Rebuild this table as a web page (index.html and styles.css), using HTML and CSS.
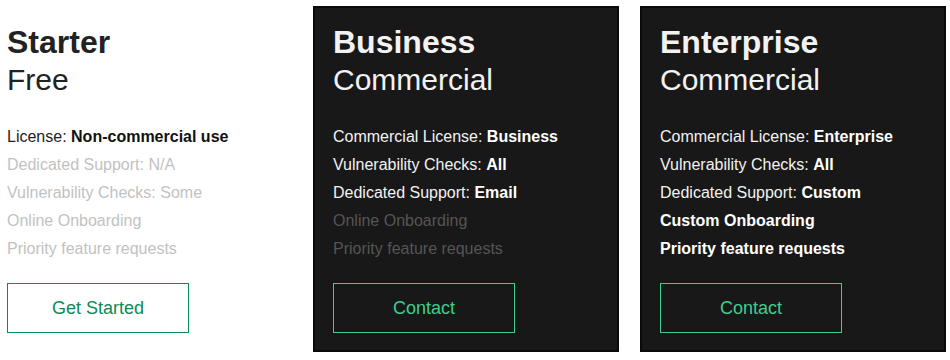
FILE: index.html
```html
<!DOCTYPE html>
<html lang="en">
<head>
    <meta charset="UTF-8">
    <meta name="viewport" content="width=device-width, initial-scale=1.0">
    <title>Pricing</title>
    <link rel="stylesheet" href="styles.css">
</head>
<body>
    <div class="plans">
        <div class="plan plan-light">
            <div class="plan-name">Starter</div>
            <div class="plan-kind">Free</div>
            <ul class="features">
                <li>License: <b>Non-commercial use</b></li>
                <li class="off">Dedicated Support: N/A</li>
                <li class="off">Vulnerability Checks: Some</li>
                <li class="off">Online Onboarding</li>
                <li class="off">Priority feature requests</li>
            </ul>
            <a class="plan-btn" href="#">Get Started</a>
        </div>

        <div class="plan plan-dark">
            <div class="plan-name">Business</div>
            <div class="plan-kind">Commercial</div>
            <ul class="features">
                <li>Commercial License: <b>Business</b></li>
                <li>Vulnerability Checks: <b>All</b></li>
                <li>Dedicated Support: <b>Email</b></li>
                <li class="off">Online Onboarding</li>
                <li class="off">Priority feature requests</li>
            </ul>
            <a class="plan-btn" href="#">Contact</a>
        </div>

        <div class="plan plan-dark">
            <div class="plan-name">Enterprise</div>
            <div class="plan-kind">Commercial</div>
            <ul class="features">
                <li>Commercial License: <b>Enterprise</b></li>
                <li>Vulnerability Checks: <b>All</b></li>
                <li>Dedicated Support: <b>Custom</b></li>
                <li><b>Custom Onboarding</b></li>
                <li><b>Priority feature requests</b></li>
            </ul>
            <a class="plan-btn" href="#">Contact</a>
        </div>
    </div>
</body>
</html>
```

FILE: styles.css
```css
body {
    margin: 0;
    background-color: #fff;
    font-family: "Liberation Sans", Arial, sans-serif;
    color: #222;
}

.plans {
    display: flex;
    gap: 21px;
    padding-top: 6px;
}

.plan {
    box-sizing: border-box;
    height: 346px;
    padding: 15px 18px 17px;
    border: 2px solid transparent;
    display: flex;
    flex-direction: column;
    align-items: flex-start;
}

.plan-light {
    width: 292px;
    padding-left: 5px;
}

.plan-dark {
    width: 306px;
    background-color: #181818;
    border-color: #0a0a0a;
    color: #f2f2f2;
}

.plan-name {
    font-size: 32px;
    font-weight: bold;
    line-height: 38px;
}

.plan-kind {
    font-size: 30px;
    line-height: 38px;
}

.features {
    list-style: none;
    margin: 24px 0 0;
    padding: 0;
    font-size: 16px;
    line-height: 28px;
}

.features b {
    color: #111;
}

.plan-dark .features b {
    color: #fff;
}

.plan-light .off {
    color: #c2c2c2;
}

.plan-dark .off {
    color: #555;
}

.plan-btn {
    box-sizing: border-box;
    width: 182px;
    height: 50px;
    margin-top: 20px;
    display: flex;
    align-items: center;
    justify-content: center;
    font-size: 18px;
    text-decoration: none;
    border: 1px solid #0b8a57;
    color: #0b8a57;
}

.plan-dark .plan-btn {
    border-color: #3ecf8e;
    color: #3ecf8e;
}
```
